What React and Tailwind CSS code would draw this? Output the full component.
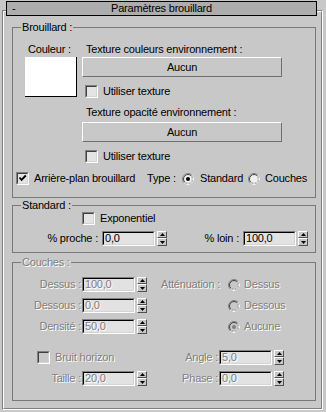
import React from "react";

const D = "text-[#808080] [text-shadow:1px_1px_0_#ffffff]";

function Check({ checked, disabled }) {
  return (
    <span className="block w-[13px] h-[13px] shrink-0 border border-t-[#808080] border-l-[#808080] border-b-white border-r-white">
      <span
        className={`flex items-center justify-center w-full h-full border border-t-[#404040] border-l-[#404040] border-b-[#d4d4d4] border-r-[#d4d4d4] ${
          disabled ? "bg-[#c8c8c8]" : "bg-[#e4e4e4]"
        }`}
      >
        {checked && (
          <svg width="9" height="9" viewBox="0 0 9 9">
            <path d="M1.5 3.5 L3.5 5.8 L7.8 1.5" fill="none" stroke="#000" strokeWidth="1.9" />
          </svg>
        )}
      </span>
    </span>
  );
}

function Radio({ checked, disabled }) {
  return (
    <svg width="12" height="12" viewBox="0 0 12 12" className="shrink-0 block">
      <circle cx="6" cy="6" r="5.5" fill={disabled ? "#c8c8c8" : "#f0f0f0"} stroke="#808080" />
      <path d="M9.89 2.11 A5.5 5.5 0 0 1 2.11 9.89" fill="none" stroke="#ffffff" />
      <circle cx="6" cy="6" r="4.5" fill="none" stroke="#404040" />
      <path d="M9.18 2.82 A4.5 4.5 0 0 1 2.82 9.18" fill="none" stroke="#d8d8d8" />
      {checked && <circle cx="6" cy="6" r="2" fill={disabled ? "#808080" : "#000"} />}
    </svg>
  );
}

function Spin() {
  return (
    <div className="ml-[2px] w-[10px] h-[15px] shrink-0 flex flex-col bg-[#c8c8c8]">
      <div className="h-[7px] border border-t-white border-l-white border-b-[#505050] border-r-[#505050] flex items-center justify-center">
        <svg width="5" height="3" viewBox="0 0 5 3" className="block">
          <path d="M2.5 0L5 3H0Z" fill="#000" />
        </svg>
      </div>
      <div className="h-[8px] border border-t-white border-l-white border-b-[#505050] border-r-[#505050] flex items-center justify-center">
        <svg width="5" height="3" viewBox="0 0 5 3" className="block">
          <path d="M0 0H5L2.5 3Z" fill="#000" />
        </svg>
      </div>
    </div>
  );
}

function Field({ value, className = "" }) {
  return (
    <div className={`w-[53px] h-[15px] shrink-0 border border-t-[#808080] border-l-[#808080] border-b-white border-r-white ${className}`}>
      <div className="h-full border border-t-black border-l-black border-b-[#d4d4d4] border-r-[#d4d4d4] bg-[#e2e2e2] pl-[1px] leading-[11px]">
        {value}
      </div>
    </div>
  );
}

function Btn({ className = "", children }) {
  return (
    <div
      className={`w-[200px] h-[20px] border border-t-white border-l-white border-b-[#707070] border-r-[#707070] flex items-center justify-center ${className}`}
    >
      {children}
    </div>
  );
}

function Group({ title, disabled, className = "", children }) {
  return (
    <div className={`w-[304px] border border-[#7a7a7a] ${className}`}>
      <div className={`-mt-[7px] ml-[8px] w-fit px-[1px] bg-[#c8c8c8] h-[13px] ${disabled ? D : ""}`}>{title}</div>
      {children}
    </div>
  );
}

export default function App() {
  return (
    <div className="w-[326px] h-[412px] bg-[#c8c8c8] overflow-hidden pt-[1px] text-[11px] leading-[13px] text-black tracking-[-0.2px] font-['Liberation_Sans',Arial,sans-serif]">
      <div className="relative z-10 ml-[6px] w-[311px] h-[15px] bg-[#adadad] border border-black grid grid-cols-[1fr_auto_1fr] items-center">
        <span className="pl-[5px]">-</span>
        <span>Paramètres brouillard</span>
        <span />
      </div>
      <div className="-mt-[6px] ml-[2px] w-[321px] h-[400px] border border-t-[#808080] border-l-[#808080] border-b-white border-r-white">
        <div className="h-full border border-t-white border-l-white border-b-[#808080] border-r-[#808080] pt-[15px] pl-[8px]">
          <Group title="Brouillard :" className="h-[171px]">
            <div className="flex">
              <div className="w-[69px]">
                <div className="ml-[15px] mt-[9px]">Couleur :</div>
                <div className="ml-[12px] mt-[1px] w-[52px] h-[40px] bg-white border-r border-b border-black" />
              </div>
              <div className="w-[200px]">
                <div className="ml-[4px] mt-[9px]">Texture couleurs environnement :</div>
                <Btn className="mt-[1px]">Aucun</Btn>
                <div className="mt-[8px] ml-[3px] flex items-center h-[13px]">
                  <Check />
                  <span className="ml-[5px]">Utiliser texture</span>
                </div>
                <div className="ml-[4px] mt-[8px]">Texture opacité environnement :</div>
                <Btn className="mt-[3px]">Aucun</Btn>
                <div className="mt-[8px] ml-[3px] flex items-center h-[13px]">
                  <Check />
                  <span className="ml-[5px]">Utiliser texture</span>
                </div>
              </div>
            </div>
            <div className="mt-[9px] ml-[3px] flex items-center h-[13px]">
              <div className="w-[131px] flex items-center">
                <Check checked />
                <span className="ml-[5px]">Arrière-plan brouillard</span>
              </div>
              <span className="w-[35px]">Type :</span>
              <div className="w-[66px] flex items-center">
                <Radio checked />
                <span className="ml-[6px]">Standard</span>
              </div>
              <div className="flex items-center">
                <Radio />
                <span className="ml-[5px]">Couches</span>
              </div>
            </div>
          </Group>

          <Group title="Standard :" className="h-[48px] mt-[7px]">
            <div className="ml-[69px] flex items-center h-[13px]">
              <Check />
              <span className="ml-[5px]">Exponentiel</span>
            </div>
            <div className="mt-[6px] flex items-center h-[15px]">
              <span className="w-[85px] text-right">% proche :</span>
              <Field className="ml-[4px]" value="0,0" />
              <Spin />
              <span className="w-[72px] text-right">% loin :</span>
              <Field className="ml-[4px]" value="100,0" />
              <Spin />
            </div>
          </Group>

          <Group title="Couches :" disabled className="h-[139px] mt-[9px]">
            <div className={D}>
              <div className="mt-[8px] flex items-center h-[15px]">
                <span className="w-[68px] text-right">Dessus :</span>
                <Field className="ml-[1px]" value="100,0" />
                <Spin />
                <span className="ml-[14px] w-[67px]">Atténuation :</span>
                <Radio disabled />
                <span className="ml-[4px]">Dessus</span>
              </div>
              <div className="mt-[6px] flex items-center h-[15px]">
                <span className="w-[68px] text-right">Dessous :</span>
                <Field className="ml-[1px]" value="0,0" />
                <Spin />
                <span className="ml-[81px]" />
                <Radio disabled />
                <span className="ml-[4px]">Dessous</span>
              </div>
              <div className="mt-[6px] flex items-center h-[15px]">
                <span className="w-[68px] text-right">Densité :</span>
                <Field className="ml-[1px]" value="50,0" />
                <Spin />
                <span className="ml-[81px]" />
                <Radio disabled checked />
                <span className="ml-[4px]">Aucune</span>
              </div>
              <div className="mt-[16px] flex items-center h-[15px]">
                <div className="w-[134px] pl-[24px] flex items-center">
                  <Check disabled />
                  <span className="ml-[5px]">Bruit horizon</span>
                </div>
                <span className="w-[71px] text-right">Angle :</span>
                <Field className="ml-[1px]" value="5,0" />
                <Spin />
              </div>
              <div className="mt-[6px] flex items-center h-[15px]">
                <span className="w-[68px] text-right">Taille :</span>
                <Field className="ml-[1px]" value="20,0" />
                <Spin />
                <span className="w-[71px] text-right">Phase :</span>
                <Field className="ml-[1px]" value="0,0" />
                <Spin />
              </div>
            </div>
          </Group>
        </div>
      </div>
    </div>
  );
}
